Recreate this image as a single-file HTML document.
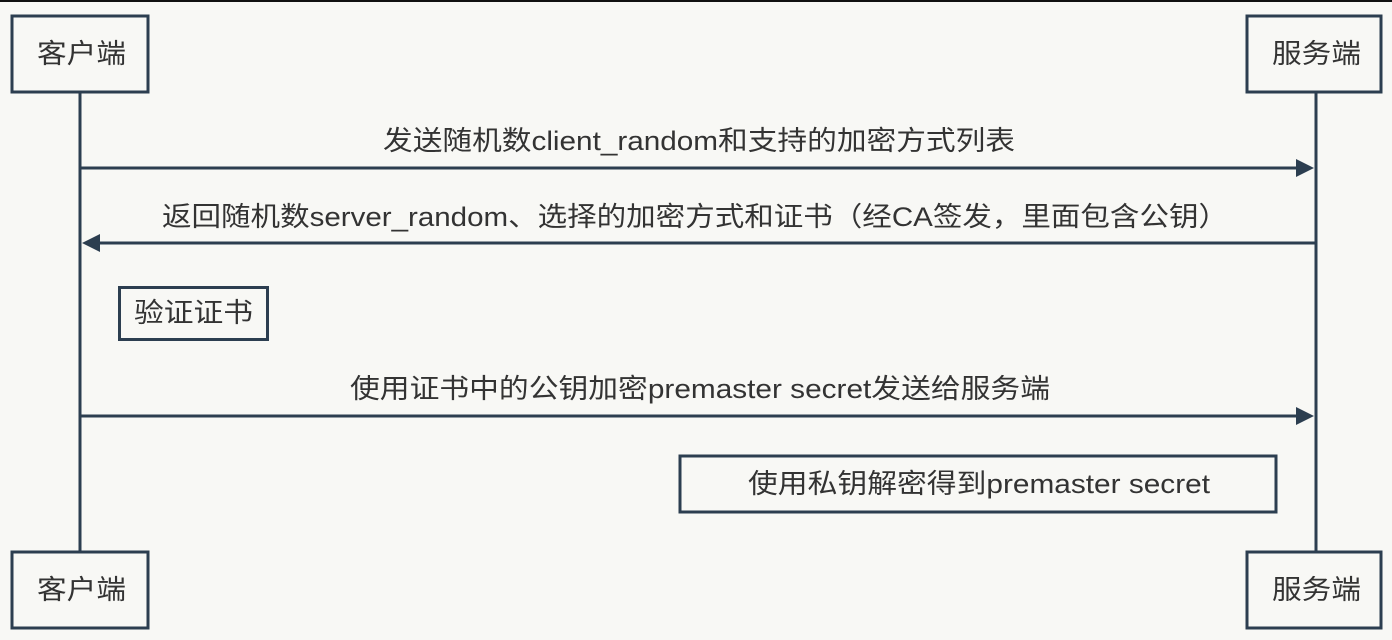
<!DOCTYPE html>
<html><head><meta charset="utf-8"><style>
html,body{margin:0;padding:0;background:#f8f8f5;}
svg{display:block}
text{font-family:"Liberation Sans","Noto Sans CJK SC",sans-serif;font-size:27px;fill:#333;}
</style></head><body>
<svg width="1392" height="640" xmlns="http://www.w3.org/2000/svg">
<rect x="0" y="0" width="1392" height="640" fill="#f8f8f5"/>
<rect x="0" y="0" width="1392" height="2" fill="#111"/>
<g stroke="#2c3e50" stroke-width="3" fill="none">
<line x1="80" y1="92" x2="80" y2="551"/>
<line x1="1316" y1="92" x2="1316" y2="551"/>
<rect x="12" y="16" width="136" height="76"/>
<rect x="1247" y="16" width="134" height="76"/>
<rect x="12" y="552" width="136" height="76"/>
<rect x="1247" y="552" width="134" height="76"/>
<rect x="119.5" y="287.5" width="148" height="52"/>
<rect x="680" y="456" width="596" height="56"/>
<line x1="80" y1="168" x2="1298" y2="168"/>
<line x1="98" y1="243" x2="1316" y2="243"/>
<line x1="80" y1="416" x2="1298" y2="416"/>
</g>
<g fill="#2c3e50">
<polygon points="1314,168 1296,159 1296,177"/>
<polygon points="82,243 100,234 100,252"/>
<polygon points="1314,416 1296,407 1296,425"/>
</g>
<g lengthAdjust="spacingAndGlyphs">
<text x="37" y="63" textLength="89" lengthAdjust="spacingAndGlyphs">客户端</text>
<text x="1272" y="63" textLength="89" lengthAdjust="spacingAndGlyphs">服务端</text>
<text x="37" y="599" textLength="89" lengthAdjust="spacingAndGlyphs">客户端</text>
<text x="1272" y="599" textLength="89" lengthAdjust="spacingAndGlyphs">服务端</text>
<text x="383" y="150" textLength="632" lengthAdjust="spacingAndGlyphs">发送随机数client_random和支持的加密方式列表</text>
<text x="162" y="226" textLength="1066" lengthAdjust="spacingAndGlyphs">返回随机数server_random、选择的加密方式和证书（经CA签发，里面包含公钥）</text>
<text x="134" y="322" textLength="119" lengthAdjust="spacingAndGlyphs">验证证书</text>
<text x="350" y="398" textLength="700" lengthAdjust="spacingAndGlyphs">使用证书中的公钥加密premaster secret发送给服务端</text>
<text x="748" y="493" textLength="462" lengthAdjust="spacingAndGlyphs">使用私钥解密得到premaster secret</text>
</g>
</svg>
</body></html>
